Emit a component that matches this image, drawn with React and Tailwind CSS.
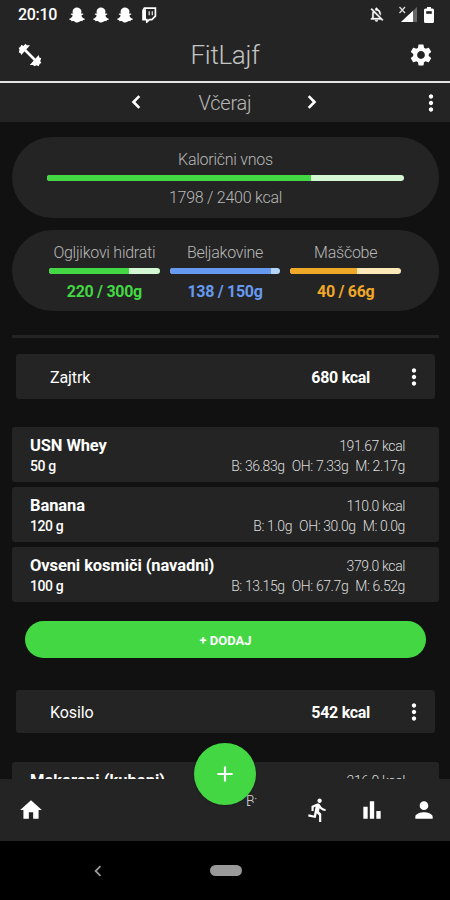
import {
  MdSettings,
  MdHome,
  MdDirectionsRun,
  MdBarChart,
  MdPerson,
  MdMoreVert,
  MdChevronLeft,
  MdOutlineNotificationsOff,
  MdAdd,
} from "react-icons/md";
import { FaSnapchatGhost } from "react-icons/fa";

const macros = [
  { name: "Ogljikovi hidrati", value: "220 / 300g", percent: 72, text: "text-[#43d843]", bar: "bg-[#43d843]", track: "bg-[#d3f7d3]" },
  { name: "Beljakovine", value: "138 / 150g", percent: 92, text: "text-[#6699f0]", bar: "bg-[#6699f0]", track: "bg-[#b4d4f8]" },
  { name: "Maščobe", value: "40 / 66g", percent: 60, text: "text-[#f0a828]", bar: "bg-[#f0a828]", track: "bg-[#fde8b8]" },
];

const breakfast = [
  { name: "USN Whey", amount: "50 g", kcal: "191.67 kcal", b: "36.83g", oh: "7.33g", m: "2.17g" },
  { name: "Banana", amount: "120 g", kcal: "110.0 kcal", b: "1.0g", oh: "30.0g", m: "0.0g" },
  { name: "Ovseni kosmiči (navadni)", amount: "100 g", kcal: "379.0 kcal", b: "13.15g", oh: "67.7g", m: "6.52g" },
];

function StatusBar() {
  return (
    <div className="flex h-7 items-center pl-[18px] pr-4 pt-px text-white">
      <span className="w-[51px] text-[16px] font-medium leading-none tracking-[-0.3px]">20:10</span>
      <div className="flex items-center gap-[8px]">
        <FaSnapchatGhost className="size-4" />
        <FaSnapchatGhost className="size-4" />
        <FaSnapchatGhost className="size-4" />
        {/* twitch */}
        <svg viewBox="0 0 16 16" className="size-4" fill="none">
          <path d="M3.400 1.200h11v8l-3.600 3.400H8.400L5.800 15v-2.400H2V3.400z" stroke="#fff" strokeWidth="1.700" />
          <path d="M2 3v9h3V2z" fill="#fff" />
          <path d="M8.200 4.200v4M11.300 4.200v4" stroke="#ddd" strokeWidth="1.300" />
        </svg>
      </div>
      <div className="ml-auto flex items-center">
        <MdOutlineNotificationsOff className="mr-[13px] size-[17px] stroke-[0.5] stroke-white [&>path:first-child]:stroke-none" />
        <svg viewBox="0 0 20 18" className="mr-[6px] h-[18px] w-5">
          <path d="M19 1v15H3z" fill="#666" />
          <path d="M15 4.800V16H3z" fill="#fff" />
          <path d="M1.500 1l5.500 6M7 1L1.500 7" stroke="#ddd" strokeWidth="1.300" />
        </svg>
        <svg viewBox="0 0 10 16" className="h-4 w-[10px]">
          <path d="M3 0h4v1.500h1.500Q10 1.500 10 3v11.500Q10 16 8.500 16h-7Q0 16 0 14.500V3Q0 1.500 1.500 1.500H3z" fill="#fff" />
          <path d="M2.200 4.200h5.600v2.600H2.200z" fill="#242424" />
        </svg>
      </div>
    </div>
  );
}

function Header() {
  return (
    <div className="flex h-[53px] items-center justify-between pl-[18px] pr-4">
      <svg viewBox="0 0 24 24" className="size-6">
        <path d="M6 6L18 18" stroke="#fff" strokeWidth="2.600" />
        <path
          d="M3.600 1.800L5.300 3 7.600 0.800 8.800 2.200 12 2.300 3.300 12 2.400 9.900 0.800 9.400 1.500 6.500 0.600 5 2.200 4z M20.700 12L21.300 14.500 23.200 15.200 22.200 18 23.400 20 21.800 20.700 20.600 23.200 18.500 22.200 16.300 23.300 15 22 11.800 22z"
          fill="#fff"
        />
      </svg>
      <h1 className="text-[26px] font-light leading-none tracking-[-0.3px] text-[#c4c4c4]">FitLajf</h1>
      <MdSettings className="size-[26px] text-white" />
    </div>
  );
}

function Chevron({ className }) {
  return (
    <svg viewBox="0 0 10 14" className={`h-[14px] w-[10px] ${className}`} fill="none" stroke="#fff" strokeWidth="2.600">
      <path d="M8.300 1.200L2.500 7l5.800 5.800" />
    </svg>
  );
}

function DateBar() {
  return (
    <div className="flex h-[39px] items-center justify-between bg-[#242424] pl-[131px] pr-[6px]">
      <div className="flex w-[186px] items-center justify-between">
        <Chevron className="-translate-y-px" />
        <span className="ml-[2px] text-[20px] font-light leading-none tracking-[-0.2px] text-[#b8b8b8]">Včeraj</span>
        <Chevron className="-translate-y-px rotate-180" />
      </div>
      <MdMoreVert className="size-[26px] text-white" />
    </div>
  );
}

function Progress({ percent, bar, track }) {
  return (
    <div className={`h-[6px] overflow-hidden rounded-full ${track}`}>
      <div className={`h-full ${bar}`} style={{ width: `${percent}%` }} />
    </div>
  );
}

function MealHeader({ name, kcal, className }) {
  return (
    <div className={`mx-4 flex w-[419px] items-center rounded-[3px] bg-[#242424] pl-[34px] pr-2 text-[16px] text-white ${className}`}>
      <span className="pt-[2px] tracking-[-0.1px]">{name}</span>
      <span className="ml-auto pt-[2px] font-bold tracking-[-0.3px]">{kcal}</span>
      <MdMoreVert className="ml-[31px] size-[26px]" />
    </div>
  );
}

function FoodRow({ food }) {
  return (
    <div className="flex h-[55px] justify-between whitespace-nowrap rounded-[3px] bg-[#242424] pl-[18px] pr-[34px] pt-2">
      <div className="text-white">
        <div className="text-[16.500px] font-bold leading-[22px] tracking-[-0.1px]">{food.name}</div>
        <div className="text-[14px] font-medium leading-[19px] tracking-[-0.4px]">{food.amount}</div>
      </div>
      <div className="text-right text-[14px] font-light tracking-[-0.4px] text-[#dedede]">
        <div className="leading-[22px]">{food.kcal}</div>
        <div className="flex justify-end gap-[7px] leading-[19px]">
          <span>B: {food.b}</span>
          <span>OH: {food.oh}</span>
          <span>M: {food.m}</span>
        </div>
      </div>
    </div>
  );
}

function BottomNav() {
  return (
    <nav className="absolute inset-x-0 bottom-[59px] h-[62px]">
      {/* bar with a notch cut out for the add button */}
      <div className="absolute inset-0 bg-[#242424] [mask-image:radial-gradient(circle_at_225px_-5px,transparent_40px,black_41px)]" />
      <div className="relative flex h-full items-center pl-[18px] pr-[13px] text-white">
        <MdHome className="size-[26px]" />
        <MdDirectionsRun className="ml-auto size-[26px]" />
        <MdBarChart className="ml-7 size-[26px]" />
        <MdPerson className="ml-[26px] size-[26px]" />
      </div>
      <button className="absolute left-[194px] top-[-36px] flex size-[62px] items-center justify-center rounded-full bg-[#43d843] text-white shadow">
        <MdAdd className="size-[26px]" />
      </button>
    </nav>
  );
}

export default function App() {
  return (
    <div className="relative h-[900px] w-[450px] overflow-hidden bg-[#111111] font-['Roboto',sans-serif]">
      <div className="border-b-2 border-[#e4e4e4] bg-[#242424]">
        <StatusBar />
        <Header />
      </div>
      <DateBar />

      <div className="mx-3 mt-[15px] h-[81px] w-[427px] rounded-full bg-[#242424] px-[35px] pt-[13px] text-center text-[16px] font-light tracking-[-0.25px] text-[#b8b8b8]">
        <div className="mb-[5px] leading-5">Kalorični vnos</div>
        <Progress percent={74} bar="bg-[#43d843]" track="bg-[#d3f7d3]" />
        <div className="mt-[7px] leading-5">1798 / 2400 kcal</div>
      </div>

      <div className="mx-3 mt-3 flex h-[81px] w-[427px] gap-[10px] rounded-full bg-[#242424] pl-[37px] pr-[38px] pt-[13px] text-center">
        {macros.map((macro) => (
          <div key={macro.name} className="flex-1">
            <div className="mb-[5px] whitespace-nowrap text-[16px] font-light leading-5 tracking-[-0.25px] text-[#b8b8b8]">{macro.name}</div>
            <Progress percent={macro.percent} bar={macro.bar} track={macro.track} />
            <div className={`mt-2 text-[16px] font-bold leading-5 tracking-[-0.3px] ${macro.text}`}>{macro.value}</div>
          </div>
        ))}
      </div>

      <div className="mx-3 mt-6 h-[3px] w-[427px] bg-[#242424]" />

      <MealHeader name="Zajtrk" kcal="680 kcal" className="mt-4 h-[45px]" />
      <div className="mx-3 mt-7 flex w-[427px] flex-col gap-[5px]">
        {breakfast.map((food) => (
          <FoodRow key={food.name} food={food} />
        ))}
      </div>
      <button className="mx-[25px] mt-[19px] block h-[37px] w-[401px] rounded-full bg-[#43d843] pt-[2px] text-[13px] font-bold text-white">
        + DODAJ
      </button>

      <MealHeader name="Kosilo" kcal="542 kcal" className="mt-8 h-[43px]" />
      <div className="mx-3 mt-[29px] flex h-[55px] w-[427px] justify-between rounded-[3px] bg-[#242424] pl-[18px] pr-[34px] pt-2">
        <div className="text-[16.500px] font-bold leading-[22px] text-white">Makaroni (kuhani)</div>
        <div className="w-[159px] text-[14px] font-light tracking-[-0.4px] text-[#dedede]">
          <div className="text-right leading-[22px]">316.0 kcal</div>
          <div className="leading-[19px]">B:</div>
        </div>
      </div>

      <BottomNav />
      <div className="absolute inset-x-0 bottom-0 flex h-[59px] items-center bg-black pl-[87px]">
        <MdChevronLeft className="size-[22px] text-[#999]" />
        <div className="ml-[101px] h-[11px] w-8 rounded-full bg-[#999]" />
      </div>
    </div>
  );
}
